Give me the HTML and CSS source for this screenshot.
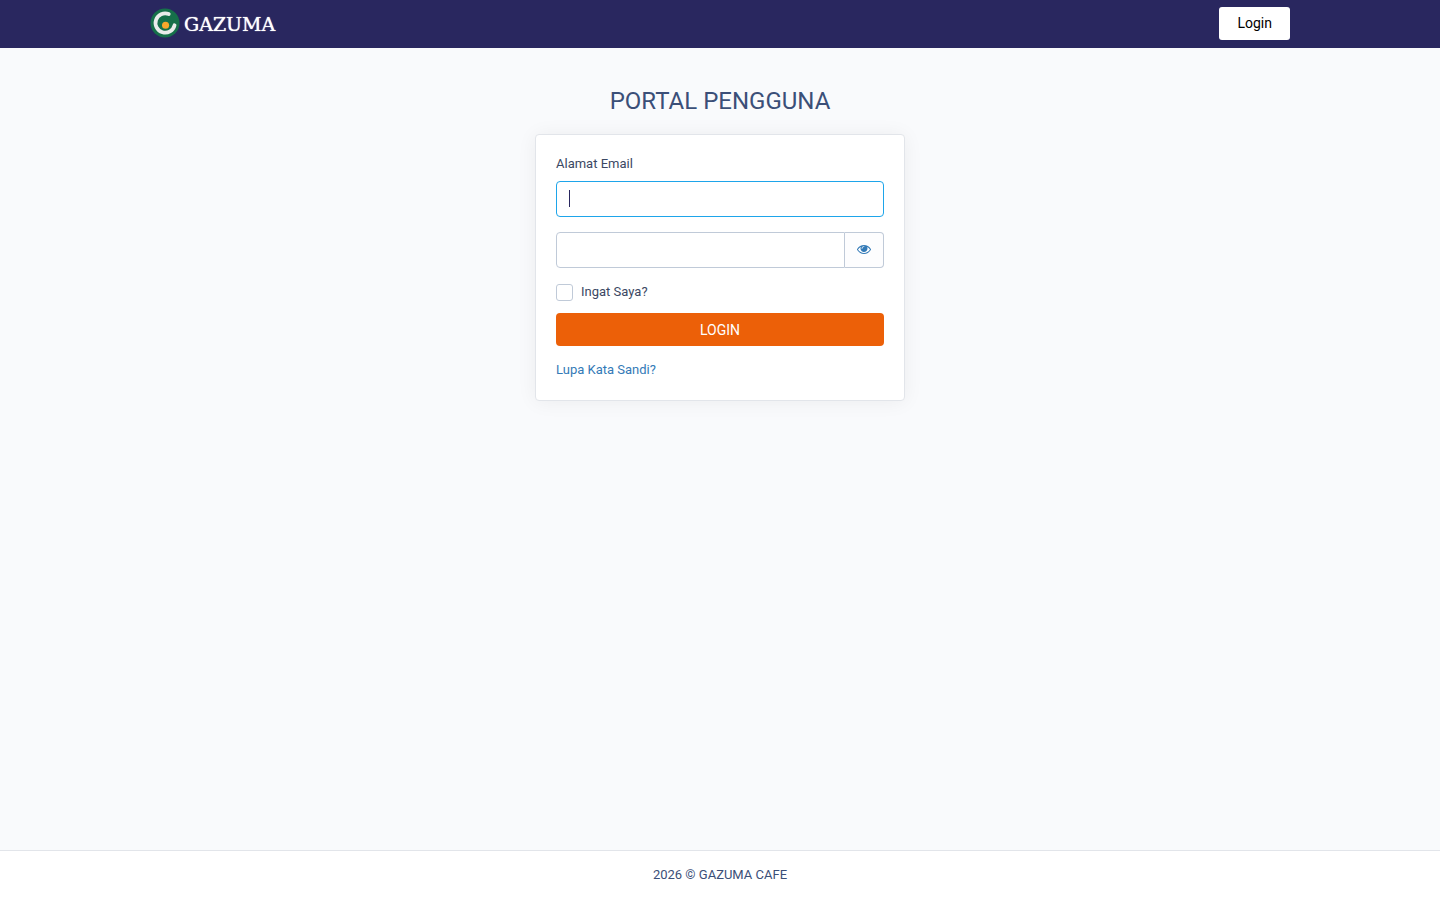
FILE: index.html
```html
<!DOCTYPE html>
<html lang="id">
<head>
    <meta charset="UTF-8">
    <meta name="viewport" content="width=device-width, initial-scale=1.0">
    <title>Portal Pengguna</title>
    <link rel="stylesheet" href="styles.css">
</head>
<body>
    <header class="topbar">
        <div class="container">
            <a href="#" class="brand">
                <svg class="brand-icon" viewBox="0 0 32 32" aria-hidden="true">
                    <circle cx="16" cy="16" r="15.5" fill="#16704a"/>
                    <path d="M20 6.4A10.3 10.3 0 1 0 26.2 18.4" fill="none" stroke="#e9eceb" stroke-width="4" stroke-linecap="round"/>
                    <circle cx="16.6" cy="18.4" r="3.8" fill="#f9a72b"/>
                </svg>
                <span class="brand-name">GAZUMA</span>
            </a>
            <button type="button" class="btn-top">Login</button>
        </div>
    </header>

    <main class="content">
        <h1>PORTAL PENGGUNA</h1>
        <form class="card">
            <label class="field-label" for="email">Alamat Email</label>
            <input type="email" id="email" class="form-control" placeholder=" " autofocus>

            <div class="input-group">
                <input type="password" id="password" class="form-control" aria-label="Kata Sandi">
                <button type="button" id="toggle" class="btn-eye" aria-label="Tampilkan kata sandi">
                    <svg viewBox="0 0 1792 1792" aria-hidden="true">
                        <path fill="currentColor" d="M1664 960q-152-236-381-353 61 104 61 225 0 185-131.500 316.500t-316.500 131.500-316.500-131.500-131.500-316.500q0-121 61-225-229 117-381 353 133 205 333.500 326.500t434.500 121.500 434.500-121.500 333.500-326.500zm-720-384q0-20-14-34t-34-14q-125 0-214.500 89.500t-89.500 214.500q0 20 14 34t34 14 34-14 14-34q0-86 61-147t147-61q20 0 34-14t14-34zm848 384q0 34-20 69-140 230-376.500 368.500t-499.500 138.500-499.500-139-376.500-368q-20-35-20-69t20-69q140-229 376.500-368t499.500-139 499.500 139 376.500 368q20 35 20 69z"/>
                    </svg>
                </button>
            </div>

            <label class="remember">
                <input type="checkbox" id="remember">
                Ingat Saya?
            </label>

            <button type="submit" class="btn-login">LOGIN</button>
            <a href="#" class="forgot">Lupa Kata Sandi?</a>
        </form>
    </main>

    <footer class="footer">2026 © GAZUMA CAFE</footer>

    <script>
        const password = document.getElementById('password');

        document.getElementById('toggle').addEventListener('click', function() {
            password.type = password.type === 'password' ? 'text' : 'password';
        });
    </script>
</body>
</html>
```
FILE: styles.css
```css
* {
    box-sizing: border-box;
}
body {
    display: flex;
    flex-direction: column;
    min-height: 100vh;
    margin: 0;
    font-family: Roboto, sans-serif;
    font-size: 13px;
    line-height: 20px;
    color: #3b4863;
    background-color: #f9fafc;
}
button, input {
    font-family: inherit;
}
button {
    cursor: pointer;
}
a {
    color: #337ab7;
    text-decoration: none;
}
.topbar {
    background-color: #29275f;
}
.container {
    display: flex;
    align-items: center;
    justify-content: space-between;
    max-width: 1140px;
    height: 48px;
    margin: 0 auto;
    padding-bottom: 2px;
}
.brand {
    display: flex;
    align-items: center;
    gap: 4px;
    color: #fff;
}
.brand-icon {
    width: 30px;
    height: 30px;
}
.brand-name {
    padding-top: 2px;
    font-family: "DejaVu Serif", serif;
    font-size: 19px;
    text-shadow: 0 0 1px #fff;
}
.btn-top {
    height: 33px;
    padding: 0 18px;
    border: none;
    border-radius: 3px;
    background-color: #fff;
    color: #000;
    font-size: 14px;
}
.content {
    flex: 1;
    width: 100%;
    max-width: 370px;
    margin: 0 auto;
    padding-top: 38px;
}
h1 {
    margin: 0 0 18px;
    font-size: 24px;
    font-weight: normal;
    line-height: 30px;
    text-align: center;
    color: #3b4f78;
}
.card {
    padding: 19px 20px 20px;
    border: 1px solid #e2e5ea;
    border-radius: 4px;
    background-color: #fff;
    box-shadow: 0 1px 20px rgba(0, 0, 0, 0.06);
}
.field-label {
    display: block;
    margin-bottom: 7px;
}
.form-control {
    display: block;
    width: 100%;
    height: 36px;
    padding: 0 12px;
    border: 1px solid #c0cad8;
    border-radius: 4px;
    background-color: #fff;
    color: #29275f;
    font-size: 14px;
    outline: none;
}
.form-control:focus {
    border-color: #1ea5ea;
}
/* steady caret while the field is empty */
.form-control:focus:placeholder-shown {
    caret-color: transparent;
    background-image: linear-gradient(#29275f, #29275f);
    background-repeat: no-repeat;
    background-position: 12px 8px;
    background-size: 1px 17px;
}
.input-group {
    display: flex;
    margin: 15px 0 14px;
}
.input-group .form-control {
    flex: 1;
    border-radius: 4px 0 0 4px;
}
.btn-eye {
    display: flex;
    align-items: center;
    justify-content: center;
    width: 39px;
    padding-bottom: 3px;
    border: 1px solid #c0cad8;
    border-left: none;
    border-radius: 0 4px 4px 0;
    background-color: #fdfdfe;
    color: #337ab7;
}
.btn-eye svg {
    flex: none;
    width: 14px;
    height: 14px;
}
.remember {
    display: flex;
    align-items: center;
    gap: 8px;
    margin-bottom: 11px;
}
.remember input {
    appearance: none;
    width: 17px;
    height: 17px;
    margin: 0;
    border: 1px solid #c0cad8;
    border-radius: 3px;
    background-color: #fff;
}
.remember input:checked {
    background-color: #1ea5ea;
}
.btn-login {
    display: block;
    width: 100%;
    height: 33px;
    margin-bottom: 14px;
    border: none;
    border-radius: 4px;
    background-color: #ec6008;
    color: #fff;
    font-size: 14px;
}
.footer {
    height: 50px;
    padding: 14px;
    border-top: 1px solid #e2e5ea;
    background-color: #fff;
    text-align: center;
    color: #3b4f78;
}
```
